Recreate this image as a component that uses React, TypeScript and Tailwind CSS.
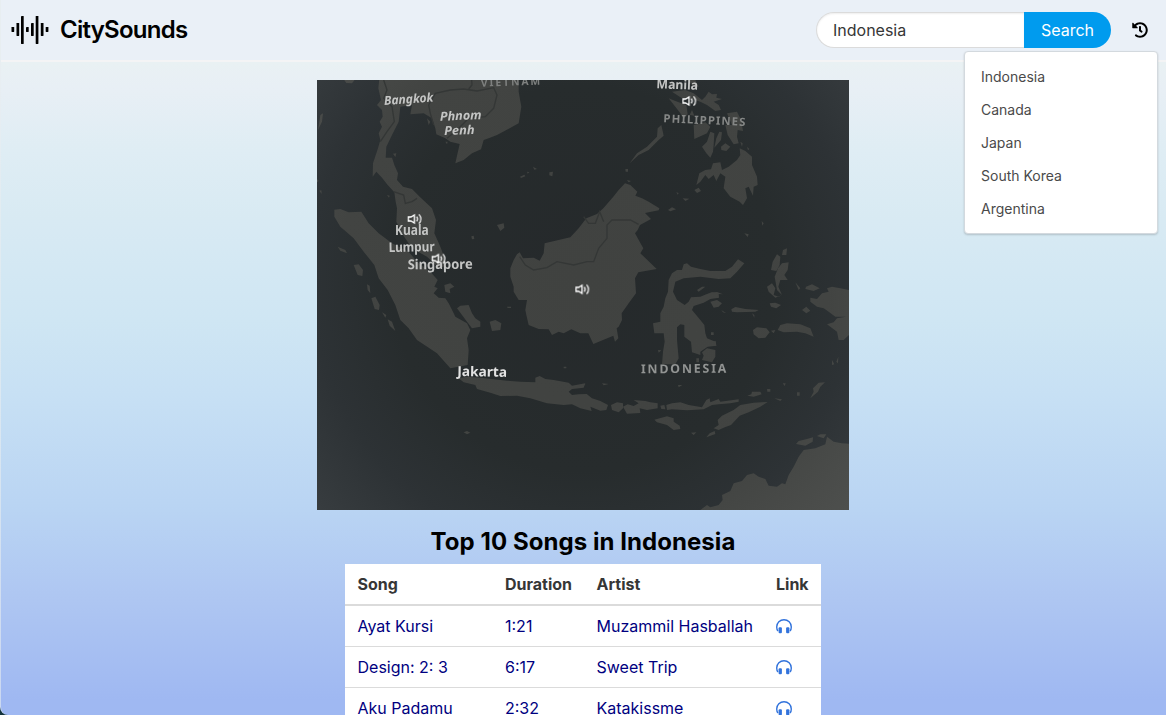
import { FaHistory } from "react-icons/fa";

const history = ["Indonesia", "Canada", "Japan", "South Korea", "Argentina"];

const songs = [
  { title: "Ayat Kursi", duration: "1:21", artist: "Muzammil Hasballah" },
  { title: "Design: 2: 3", duration: "6:17", artist: "Sweet Trip" },
  { title: "Aku Padamu", duration: "2:32", artist: "Katakissme" },
];

const bars = [
  [12, 27, 32],
  [17, 23, 36],
  [21.5, 16, 44],
  [26.5, 27, 32],
  [31.5, 23, 36],
  [36.2, 16, 44],
  [41.3, 23, 36],
  [46.2, 27, 32],
];

function Logo() {
  return (
    <svg className="h-[28px] w-[38px]" viewBox="11.5 16 38 28">
      {bars.map(([x, top, bottom]) => (
        <rect key={x} x={x} y={top} width="2.7" height={bottom - top} rx="0.4" />
      ))}
    </svg>
  );
}

function Headphones() {
  return (
    <svg className="h-4 w-[16px]" viewBox="0 0 16 16">
      <path
        d="M2 13 C1 12 .7 10.6 .7 9 A7.3 7.3 0 0 1 15.3 9 C15.3 10.6 15 12 14 13"
        fill="none"
        stroke="currentColor"
        strokeWidth="1.4"
      />
      <rect x="2.6" y="9.2" width="3.3" height="6" rx="1" fill="currentColor" />
      <rect x="10.1" y="9.2" width="3.3" height="6" rx="1" fill="currentColor" />
    </svg>
  );
}

function Speaker({ x, y }: { x: number; y: number }) {
  return (
    <g transform={`translate(${x} ${y})`} fill="none" stroke="#fff" strokeWidth="4">
      <path d="M-19 -6 H-11 L-1 -12 V12 L-11 6 H-19 Z" />
      <path d="M6 -7 Q11 0 6 7" strokeWidth="3.5" />
      <path d="M13 -14 Q24 0 13 14" strokeWidth="3.5" />
    </g>
  );
}

function WorldMap() {
  return (
    <svg className="block h-[430px] w-[532px] shrink-0" viewBox="0 15 1596 1290">
      <defs>
        <radialGradient id="sea" gradientUnits="userSpaceOnUse" cx="800" cy="610" r="1050">
          <stop offset="0" stopColor="#25292b" />
          <stop offset="0.55" stopColor="#272c2d" />
          <stop offset="0.78" stopColor="#2d3235" />
          <stop offset="1" stopColor="#373c3f" />
        </radialGradient>
        <radialGradient id="land" gradientUnits="userSpaceOnUse" cx="800" cy="610" r="1050">
          <stop offset="0" stopColor="#404240" />
          <stop offset="0.7" stopColor="#424442" />
          <stop offset="1" stopColor="#4d4f4d" />
        </radialGradient>
        <filter id="soft" x="-5%" y="-5%" width="110%" height="110%" colorInterpolationFilters="sRGB">
          <feGaussianBlur stdDeviation="1.3" />
        </filter>
      </defs>
      <rect y="15" width="1596" height="1290" fill="url(#sea)" />

      <g fill="url(#land)" filter="url(#soft)">
        {/* Indochina and the Malay peninsula */}
        <path d="M188 0 L184 40 192 75 180 90 195 105 197 125 188 140 195 155 185 175 190 195 183 220 168 265 167 305 178 290 195 308 212 330 232 352 236 380 240 400 238 440 258 480 285 520 330 545 365 578 380 575 385 555 370 515 352 475 357 435 345 400 308 365 285 342 258 335 240 315 243 295 232 270 225 248 206 248 208 215 225 180 245 140 250 95 285 90 280 118 320 115 345 130 355 160 358 178 385 190 400 200 428 207 415 265 440 255 465 235 492 223 500 195 515 190 540 180 605 145 613 95 605 50 605 0 Z" />
        {/* Sumatra */}
        <path d="M52 404 L70 402 95 412 133 410 155 445 185 475 225 505 275 530 300 560 340 590 362 615 352 635 362 640 350 655 365 668 385 670 395 685 410 715 415 725 450 745 460 765 450 790 455 825 452 870 400 880 360 835 300 795 275 760 250 735 235 690 212 645 185 610 172 570 140 530 110 490 70 455 52 425 Z" />
        <path d="M420 700 L430 692 455 690 465 715 475 730 490 740 490 755 465 760 450 740 Z M518 740 L535 735 553 745 550 765 525 768 Z" />
        <path d="M382 630 L400 625 412 635 398 642 400 655 385 650 Z M540 450 L560 445 562 458 550 468 Z M463 484 L470 482 472 492 465 493 Z" />
        <path d="M62 515 L85 525 90 535 70 527 Z M110 570 L125 568 138 585 136 603 122 600 Z M150 628 L158 632 160 655 152 645 Z M163 670 L175 665 188 690 186 705 173 702 Z M195 712 L208 720 205 728 Z M212 733 L225 740 235 768 218 752 Z" />
        <path d="M10 120 L18 115 15 140 3 165 Z M7 347 L13 346 14 357 Z M0 312 L5 318 0 322 Z M80 12 L115 12 105 25 88 24 Z M609 305 L622 299 625 304 612 309 Z M630 290 L637 292 632 296 Z M648 275 L660 282 652 284 Z M697 292 L708 290 706 304 697 301 Z M228 236 L238 235 235 246 Z M385 200 L392 200 390 208 Z M210 360 L218 362 216 368 Z M330 130 L340 140 335 150 Z" />
        {/* Borneo */}
        <path d="M590 555 L600 538 608 532 618 550 650 548 668 557 680 535 683 505 760 487 785 460 808 430 840 417 859 400 889 365 905 345 924 325 940 330 961 350 955 362 975 370 995 380 1027 400 1025 406 984 414 1002 432 969 450 962 465 954 475 968 500 979 520 970 535 1019 582 985 588 964 592 954 610 957 655 935 685 914 715 915 735 905 755 899 760 904 790 894 800 889 782 829 807 814 775 790 775 763 763 740 775 725 770 705 780 695 763 665 762 635 750 628 720 625 705 630 675 605 675 590 650 590 635 580 605 580 580 Z" />
        {/* Java, Madura and Bali */}
        <path d="M425 910 L450 905 490 908 570 917 610 920 655 922 655 908 668 903 685 912 710 915 755 923 765 932 805 925 800 938 765 942 755 950 765 960 785 958 809 957 825 970 850 978 873 990 868 1005 850 1007 820 995 824 1008 790 1000 765 988 740 990 690 985 640 970 600 962 550 963 520 953 480 942 475 930 440 922 Z" />
        <path d="M882 990 L900 982 918 985 918 1000 905 1012 885 1005 Z M918 995 L932 988 950 993 965 985 950 975 985 978 1000 982 1022 985 1022 1000 990 1005 968 1000 970 1014 930 1016 Z M1030 992 L1042 990 1045 1003 1033 1002 Z M1048 990 L1065 985 1090 982 1115 990 1155 997 1168 975 1178 970 1180 982 1205 972 1210 980 1265 973 1265 980 1240 985 1205 988 1185 990 1160 1003 1110 1006 1065 1003 1050 1005 Z" />
        <path d="M1012 1034 L1050 1024 1070 1030 1070 1040 1088 1052 1090 1062 1070 1065 1050 1050 1020 1042 Z M1122 1073 L1138 1072 1130 1080 Z M1168 1087 L1178 1075 1193 1068 1195 1077 Z" />
        {/* Timor */}
        <path d="M1190 1060 L1205 1050 1202 1035 1215 1022 1250 1005 1270 990 1310 983 1352 981 1330 995 1295 1012 1268 1022 1242 1050 1225 1056 1205 1065 Z M1291 962 L1303 958 1305 950 1330 950 1334 958 1310 965 Z M1350 942 H1360 V950 H1351 Z M1372 970 L1395 973 1390 978 Z M1397 925 H1406 L1403 933 Z M1440 952 H1448 V962 H1440 Z M1480 970 L1490 950 1488 940 1505 923 1524 922 1510 935 1503 950 Z" />
        {/* Sulawesi */}
        <path d="M1053 650 L1055 615 1065 595 1080 585 1095 585 1100 568 1110 565 1122 575 1150 582 1180 588 1225 588 1245 575 1263 553 1282 565 1260 590 1240 610 1205 612 1150 605 1100 610 1075 620 1068 650 1080 675 1103 690 1115 680 1122 667 1150 665 1168 658 1185 652 1205 655 1206 668 1180 672 1160 683 1130 693 1125 705 1150 735 1162 750 1165 775 1170 790 1195 800 1198 812 1172 815 1150 830 1150 840 1125 832 1122 800 1102 785 1102 750 1090 748 1080 757 1080 795 1085 850 1075 868 1035 868 1038 830 1043 800 1040 775 1012 775 1008 745 1030 740 1030 715 1040 695 1045 670 Z" />
        <path d="M1155 832 L1170 820 1195 825 1195 845 1185 862 1155 855 1160 842 Z M1180 680 L1200 675 1215 685 1205 695 1190 698 Z M1213 705 L1228 715 1218 712 Z M1140 645 L1155 635 1165 635 1145 650 Z M1172 655 L1200 651 1218 658 Z M1138 850 H1146 V862 H1138 Z M1023 825 L1033 826 1025 833 Z M1182 772 H1190 V780 H1182 Z M1188 800 L1196 798 1198 812 1188 810 Z M855 925 L875 927 860 931 Z M1083 930 H1096 L1085 937 Z M788 930 L805 927 795 936 Z M440 1072 L450 1068 460 1073 450 1078 Z M570 695 H582 V699 H572 Z M740 875 H748 V880 H740 Z" />
        {/* Palawan and the Philippines */}
        <path d="M938 265 L960 235 990 215 1020 185 1022 160 1033 150 1040 182 1025 195 995 225 965 240 Z" />
        <path d="M1055 70 L1075 78 1108 90 1112 118 1100 132 1090 115 1075 95 Z M1065 50 L1105 45 1130 55 1155 75 1165 65 1175 50 1185 58 1200 57 1198 68 1215 72 1190 80 1205 90 1212 105 1195 108 1170 90 1150 80 1125 72 1095 70 Z M1110 15 L1135 15 1145 35 1130 35 Z" />
        <path d="M1130 150 L1165 142 1180 155 1170 175 1132 192 Z M1170 200 L1155 215 1168 235 1180 248 1188 230 1190 210 1192 175 1180 170 Z M1198 190 L1207 170 1215 172 1212 195 1192 218 Z M1212 215 L1225 205 1240 215 1228 228 1213 225 Z M1230 115 L1260 110 1272 135 1278 168 1262 165 1260 185 1265 205 1250 208 1232 180 1225 150 1245 150 Z M1118 120 L1125 105 1132 122 Z M1270 200 L1277 205 1275 215 Z M1290 215 L1297 222 1293 226 Z" />
        <path d="M1138 330 L1147 295 1165 285 1182 283 1188 265 1210 262 1215 285 1235 275 1260 255 1270 240 1268 220 1285 228 1305 245 1305 270 1320 305 1322 330 1310 335 1308 362 1295 335 1285 340 1290 370 1278 390 1268 380 1240 365 1220 340 1225 305 1210 295 1198 318 1190 300 1175 312 1165 300 1150 320 Z" />
        <path d="M1132 345 L1145 338 1152 348 1140 354 Z M1097 370 L1117 371 1105 378 Z M1053 405 L1065 397 1077 403 1060 409 Z M1078 352 L1085 354 1082 359 Z M925 282 H933 V290 H926 Z M930 315 L942 318 935 322 Z M1334 438 L1340 445 1336 452 Z M1282 475 L1295 478 1292 486 Z" />
        {/* Maluku islands */}
        <path d="M1362 585 L1367 560 1380 538 1390 545 1388 570 1378 588 Z M1395 540 L1398 525 1410 520 1408 540 Z M1383 580 L1395 565 1415 562 1412 585 1402 600 1412 615 1390 615 1384 635 1395 660 1380 645 1373 605 Z M1350 635 L1365 625 1375 640 1370 660 1385 665 1395 660 1375 668 1355 650 Z M1435 622 L1450 640 1445 645 Z M1467 635 L1485 628 1508 640 1490 648 1465 642 Z" />
        <path d="M1243 703 L1255 696 1285 702 1325 705 1315 710 1260 712 1245 710 Z M1305 715 L1312 720 1312 728 Z M1308 765 L1320 757 1348 760 1358 772 1345 788 1325 790 1310 778 Z M1382 765 L1390 750 1410 745 1450 748 1480 760 1490 785 1465 775 1440 770 1400 772 Z M1362 767 L1375 765 1370 775 Z M1358 685 L1375 683 1392 690 1378 700 1362 695 Z M1455 705 L1468 695 1480 707 1468 715 Z" />
        {/* New Guinea */}
        <path d="M1596 725 L1555 725 1535 710 1520 700 1500 695 1480 680 1480 668 1500 672 1515 655 1535 650 1530 640 1545 635 1570 640 1596 645 Z M1596 780 L1580 795 1565 795 1560 770 1530 748 1550 742 1560 730 1596 724 Z M1558 860 L1564 845 1563 865 Z M1545 855 L1552 868 1545 870 Z" />
        {/* Australia */}
        <path d="M1150 1305 L1170 1290 1180 1297 1205 1290 1217 1275 1215 1260 1240 1248 1250 1225 1275 1218 1290 1200 1310 1195 1325 1205 1345 1212 1355 1232 1380 1235 1395 1225 1405 1228 1415 1200 1430 1175 1445 1145 1460 1125 1495 1120 1525 1108 1530 1085 1550 1100 1575 1105 1596 1106 V1305 Z M1437 1107 L1445 1098 1470 1092 1488 1087 1487 1100 1465 1112 Z M1500 1083 L1510 1078 1528 1078 1520 1090 Z" />
      </g>

      <g fill="none" stroke="#343736" strokeWidth="4" filter="url(#soft)">
        <path d="M200 15 L210 45 200 70 225 95 232 140 210 170 190 200" />
        <path d="M350 150 L340 115 335 90 355 55 400 45 440 42 480 48 530 38 540 60 530 100 505 125 455 130 420 165 390 190" />
        <path d="M463 0 L465 30 455 42" />
        <path d="M230 350 L260 360 265 385 285 380 300 370" />
        <path d="M608 545 L625 570 650 585 690 578 720 560 770 570 810 560 830 560 845 520 870 490 870 450 885 435 940 435 965 448" />
        <path d="M800 425 L815 445 835 445 848 410 860 440" />
      </g>

      <g
        filter="url(#soft)"
        fontFamily='"Noto Sans", "Open Sans", sans-serif'
        fontWeight="700"
        fill="#c4c5c4"
      >
        <text x="202" y="90" fontSize="37" fontStyle="italic" textLength="148" lengthAdjust="spacingAndGlyphs" transform="rotate(-4 202 90)">Bangkok</text>
        <text x="369" y="137" fontSize="37" fontStyle="italic" textLength="125" lengthAdjust="spacingAndGlyphs" transform="rotate(-2 369 137)">Phnom</text>
        <text x="382" y="180" fontSize="37" fontStyle="italic" textLength="91" lengthAdjust="spacingAndGlyphs" transform="rotate(-2 382 180)">Penh</text>
        <text x="492" y="35" fontSize="31" fill="#7e807f" textLength="178" transform="rotate(-2 492 35)">VIETNAM</text>
        <text x="1018" y="40" fontSize="38" textLength="125" lengthAdjust="spacingAndGlyphs" transform="rotate(2 1018 40)">Manila</text>
        <text x="1039" y="142" fontSize="34" fill="#858786" textLength="246" transform="rotate(2.5 1039 142)">PHILIPPINES</text>
        <text x="234" y="481" fontSize="40" textLength="101" lengthAdjust="spacingAndGlyphs">Kuala</text>
        <text x="215" y="531" fontSize="40" textLength="138" lengthAdjust="spacingAndGlyphs" transform="rotate(-1 215 531)">Lumpur</text>
        <text x="272" y="583" fontSize="41" textLength="195" lengthAdjust="spacingAndGlyphs" transform="rotate(-.5 272 583)">Singapore</text>
        <text x="421" y="903" fontSize="41" fill="#e2e2e2" textLength="149" lengthAdjust="spacingAndGlyphs" transform="rotate(1 421 903)">Jakarta</text>
        <text x="972" y="895" fontSize="37" fill="#929493" textLength="256" transform="rotate(-.5 972 895)">INDONESIA</text>
      </g>
      <Speaker x={293} y={432} />
      <Speaker x={365} y={551} />
      <Speaker x={796} y={643} />
      <Speaker x={1117} y={78} />
    </svg>
  );
}

export default function App() {
  return (
    <div className="h-[715px] overflow-hidden bg-[#12333d] font-['Inter',sans-serif]">
      <div className="flex h-full flex-col overflow-hidden rounded-bl-[8px] border-l border-[#e8edf0]/60 bg-[linear-gradient(180deg,#e9f1f3_62px,#e8eff5_88px,#dfedf4_150px,#d8eaf3_220px,#cfe6f3_320px,#c7e0f4_395px,#b9d4f3_510px,#aec6f2_600px,#9fb8f2_700px)]">
        <header className="flex h-[62px] shrink-0 items-center border-b-2 border-[#f4f4f5] bg-[#eaf0f7] pl-[10px]">
          <Logo />
          <h1 className="ml-[11px] text-2xl font-semibold tracking-[-0.75px] text-black">CitySounds</h1>
          <div className="ml-auto flex h-9">
            <div className="flex w-[208px] items-center rounded-l-full border border-r-0 border-[#dbdbdb] bg-white pl-4 text-base text-[#363636] shadow-[inset_0_1px_2px_rgba(10,10,10,0.07)]">
              Indonesia
            </div>
            <button className="w-[87px] rounded-r-full bg-[#009bee] text-base text-white">Search</button>
          </div>
          <div className="relative mr-[18px] ml-[21px] text-black">
            <FaHistory className="size-4" />
            <ul className="absolute top-[29px] -right-[10px] h-[183px] w-[194px] rounded border border-[#d3d9de] bg-white px-4 py-2 text-sm text-[#4a4a4a] shadow-[0_1px_2px_rgba(10,10,10,0.18)]">
              {history.map((name) => (
                <li key={name} className="flex h-[33px] items-center">
                  {name}
                </li>
              ))}
            </ul>
          </div>
        </header>
        <main className="flex flex-col items-center pt-[18px] pr-px">
          <WorldMap />
          <h2 className="mt-[14px] text-2xl leading-9 font-bold tracking-[0.06px] text-black">Top 10 Songs in Indonesia</h2>
          <table className="mt-1 w-[476px] shrink-0 table-fixed border-separate border-spacing-0 bg-white text-base">
            <colgroup>
              <col className="w-[147.5px]" />
              <col className="w-[91.5px]" />
              <col className="w-[179.5px]" />
              <col className="w-[57.5px]" />
            </colgroup>
            <thead>
              <tr className="text-left text-[#363636] *:h-[42px] *:border-b-2 *:border-[#dbdbdb] *:py-0 *:pr-0 *:pl-[12.5px] *:font-bold">
                <th>Song</th>
                <th>Duration</th>
                <th>Artist</th>
                <th>Link</th>
              </tr>
            </thead>
            <tbody>
              {songs.map((song) => (
                <tr
                  key={song.title}
                  className="text-[#000080] *:h-[41px] *:border-b *:border-[#dbdbdb] *:py-0 *:pr-0 *:pl-[12.5px] *:whitespace-nowrap"
                >
                  <td>{song.title}</td>
                  <td>{song.duration}</td>
                  <td>{song.artist}</td>
                  <td>
                    <span className="block text-[#3273dc]">
                      <Headphones />
                    </span>
                  </td>
                </tr>
              ))}
            </tbody>
          </table>
        </main>
      </div>
    </div>
  );
}
